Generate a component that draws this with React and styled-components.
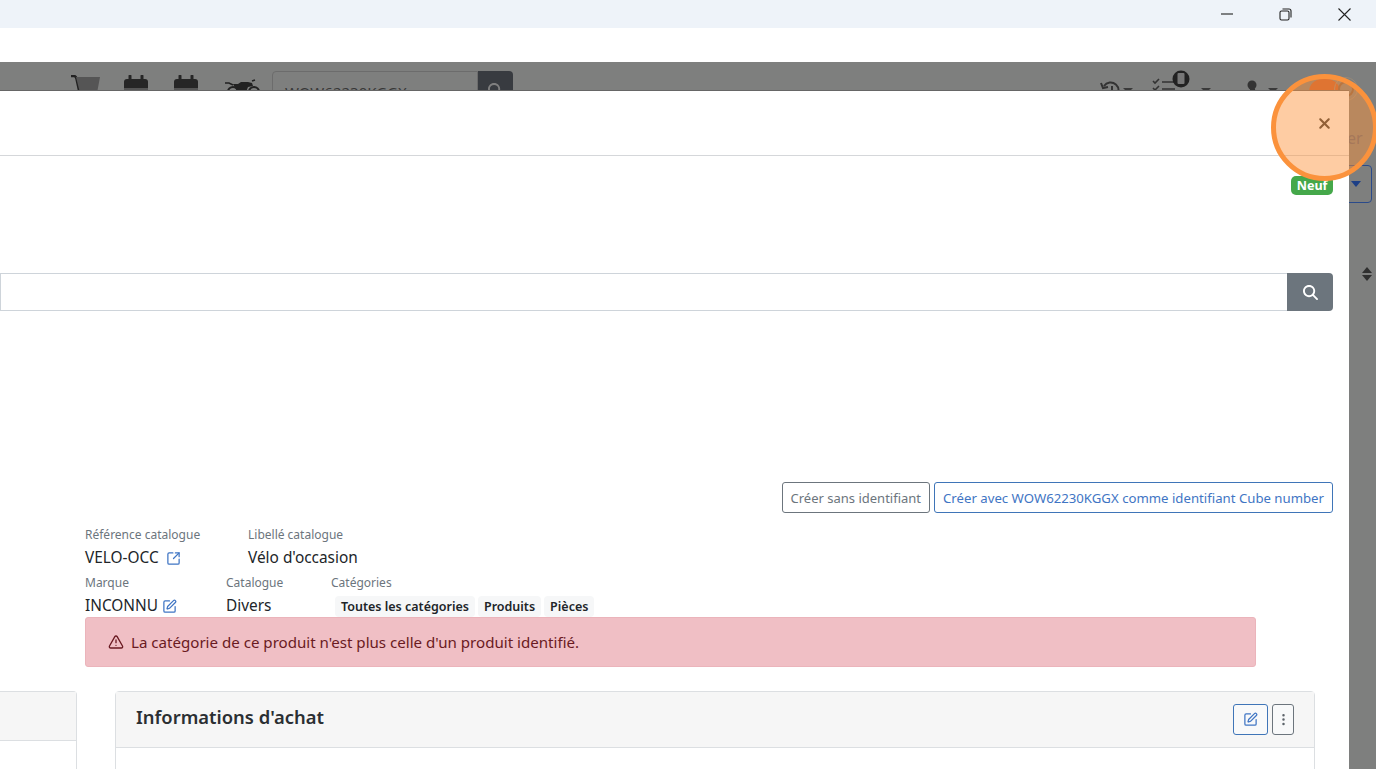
import React from 'react';
import styled, { createGlobalStyle } from 'styled-components';
import { SquareArrowOutUpRight, SquarePen, TriangleAlert, EllipsisVertical } from 'lucide-react';
import { FaMagnifyingGlass, FaXmark } from 'react-icons/fa6';

const GlobalStyle = createGlobalStyle`
  html, body {
    margin: 0;
    height: 100%;
    overflow: hidden;
    background: #fff;
  }
  body {
    font-family: "Noto Sans", "Open Sans", "Liberation Sans", sans-serif;
    color: #212529;
  }
  * { box-sizing: border-box; }
`;

const Screen = styled.div`
  height: 100vh;
  display: flex;
  flex-direction: column;
`;

const TitleBar = styled.div`
  height: 28px;
  background: #eef3f9;
  display: flex;
  justify-content: flex-end;
  padding-right: 2px;
`;

const WinButton = styled.button`
  width: 59px;
  height: 28px;
  padding: 0;
  border: none;
  background: none;
  display: flex;
  align-items: center;
  justify-content: center;
`;

const AddressBar = styled.div`
  height: 34px;
  background: #fff;
`;

const Stage = styled.div`
  position: relative;
  flex: 1;
  background: #7e7f7e;
  overflow: hidden;
`;

const BackNav = styled.div`
  height: 29px;
  padding: 9px 0 0 70px;
  display: flex;
  align-items: flex-start;
  overflow: hidden;
`;

const BackIcon = styled.svg`
  flex: none;
  margin-top: ${props => props.$top || 0}px;
  margin-right: ${props => props.$gap || 0}px;
`;

const BackSearch = styled.div`
  width: 206px;
  height: 36px;
  flex: none;
  border: 1px solid #6c6c6c;
  border-radius: 4px 0 0 4px;
  background: #7e7f7e;
  color: #383838;
  font-size: 15px;
  padding: 10px 12px;
  white-space: nowrap;
`;

const BackSearchButton = styled.div`
  width: 35px;
  height: 36px;
  flex: none;
  background: #383b40;
  border-radius: 0 4px 4px 0;
  color: #7f7f7f;
  display: flex;
  justify-content: center;
  padding-top: 12px;
  margin-right: 587px;
`;

const BackCaret = styled.span`
  width: 0;
  height: 0;
  flex: none;
  margin: 17px ${props => props.$right}px 0 ${props => props.$left}px;
  border-left: 5px solid transparent;
  border-right: 5px solid transparent;
  border-top: 5px solid #3a3a3a;
`;

const BackAvatar = styled.span`
  position: absolute;
  left: 1309px;
  top: 17px;
  width: 31px;
  height: 26px;
  border-radius: 13px;
  background: #c4592a;
`;

const BackHelp = styled.span`
  position: absolute;
  left: 1334px;
  top: 15px;
  width: 24px;
  height: 24px;
  border-radius: 50%;
  border: 1px solid #9a8a78;
  display: flex;
  align-items: center;
  justify-content: center;
  &::after {
    content: '';
    width: 12px;
    height: 12px;
    border-radius: 50%;
    border: 2px solid #7d5c44;
  }
`;

const BackLabel = styled.span`
  position: absolute;
  left: 1347px;
  top: 65px;
  font-size: 16px;
  line-height: 22px;
  color: #576075;
`;

const BackSelect = styled.div`
  position: absolute;
  left: 1340px;
  top: 103px;
  width: 32px;
  height: 38px;
  border: 1px solid #2a4a8a;
  border-radius: 4px;
  display: flex;
  align-items: center;
  justify-content: flex-end;
  padding-right: 10px;
  &::after {
    content: '';
    border-left: 5px solid transparent;
    border-right: 5px solid transparent;
    border-top: 6px solid #1d3f86;
  }
`;

const SortArrows = styled.div`
  position: absolute;
  left: 1362px;
  top: 205px;
  display: flex;
  flex-direction: column;
  gap: 2px;
  &::before, &::after {
    content: '';
    border-left: 5px solid transparent;
    border-right: 5px solid transparent;
  }
  &::before { border-bottom: 6px solid #2f2f2f; }
  &::after { border-top: 6px solid #2f2f2f; }
`;

const Modal = styled.div`
  position: absolute;
  left: 0;
  top: 28px;
  width: 1349px;
  bottom: 0;
  background: #fff;
  border-top: 1px solid #666;
  display: flex;
  flex-direction: column;
`;

const ModalHeader = styled.div`
  height: 65px;
  flex: none;
  border-bottom: 1px solid #d5d7da;
  display: flex;
  align-items: center;
  justify-content: flex-end;
  padding: 0 16px 0 0;
`;

const CloseButton = styled.button`
  border: none;
  background: none;
  padding: 0;
  display: flex;
  color: #333;
`;

const ModalBody = styled.div`
  padding: 20px 0 0 0;
  display: flex;
  flex-direction: column;
`;

const StateRow = styled.div`
  display: flex;
  justify-content: flex-end;
  padding-right: 16px;
  height: 77px;
  margin-bottom: 20px;
`;

const Badge = styled.span`
  height: 19px;
  padding: 0 5.5px;
  border-radius: 5px;
  background: #45a84a;
  color: #fff;
  font-size: 12.6px;
  font-weight: 700;
  line-height: 19px;
`;

const SearchGroup = styled.div`
  display: flex;
  height: 38px;
  padding-right: 16px;
`;

const SearchField = styled.div`
  flex: 1;
  border: 1px solid #ced4da;
  border-right: none;
`;

const SearchButton = styled.button`
  width: 46px;
  padding: 0;
  border: none;
  border-radius: 0 4px 4px 0;
  background: #6c757d;
  color: #fff;
  display: flex;
  align-items: center;
  justify-content: center;
`;

const ActionRow = styled.div`
  display: flex;
  justify-content: flex-end;
  gap: 4px;
  padding-right: 16px;
  margin-top: 171px;
`;

const OutlineButton = styled.button`
  height: 31px;
  padding: 0 8px;
  background: #fff;
  border: 1px solid ${props => props.$primary ? '#3f75b8' : '#6c757d'};
  color: ${props => props.$primary ? '#3f75c4' : '#6c757d'};
  border-radius: 3px;
  font-family: inherit;
  font-size: ${props => props.$primary ? 13.2 : 13}px;
  white-space: nowrap;
`;

const InfoBlock = styled.div`
  padding: 12px 0 0 85px;
  display: flex;
  flex-direction: column;
`;

const InfoRow = styled.div`
  display: flex;
  height: 48px;
`;

const InfoCol = styled.div`
  width: ${props => props.$width}px;
  flex: none;
`;

const Label = styled.div`
  height: 20px;
  font-size: 12px;
  line-height: 20px;
  color: #6c757d;
`;

const Value = styled.div`
  height: 26px;
  font-size: 15.4px;
  line-height: 26px;
  display: flex;
  align-items: center;
  gap: ${props => props.$gap || 0}px;
  color: #212529;
`;

const IconLink = styled.span`
  display: flex;
  color: #3f75c4;
`;

const Tags = styled.div`
  display: flex;
  gap: 3px;
  padding: 3px 0 0 4px;
`;

const Tag = styled.span`
  height: 21px;
  padding: 0 6px;
  background: #f6f7f8;
  border-radius: 4px;
  font-size: 12.5px;
  font-weight: 600;
  line-height: 21px;
  color: #212529;
  white-space: nowrap;
`;

const Alert = styled.div`
  width: 1171px;
  height: 50px;
  margin-top: -4px;
  padding: 0 22px;
  background: #f0bfc5;
  border: 1px solid #ebb4bb;
  border-radius: 3px;
  color: #6a1a22;
  font-size: 15.1px;
  display: flex;
  align-items: center;
  gap: 7px;
`;

const CardRow = styled.div`
  display: flex;
  gap: 38px;
  padding-right: 34px;
  margin-top: 24px;
`;

const Card = styled.div`
  ${props => props.$stub ? 'width: 77px; flex: none;' : 'flex: 1;'}
  height: 120px;
  border: 1px solid #dcdfe2;
  ${props => props.$stub && 'border-left: none;'}
  border-radius: ${props => props.$stub ? '0 4px 0 0' : '4px 4px 0 0'};
`;

const CardHeader = styled.div`
  height: ${props => props.$stub ? 49 : 56}px;
  background: #f6f6f6;
  border-bottom: 1px solid #dcdfe2;
  display: flex;
  align-items: center;
  justify-content: space-between;
  padding: 0 20px;
`;

const CardTitle = styled.h5`
  margin: 0 0 6px;
  font-size: 18.4px;
  font-weight: 600;
  color: #2b2f33;
`;

const CardTools = styled.div`
  display: flex;
  gap: 4px;
`;

const ToolButton = styled.button`
  height: 31px;
  width: ${props => props.$primary ? 35 : 22}px;
  padding: 0;
  background: #f8f9fa;
  border: 1px solid ${props => props.$primary ? '#3f75b8' : '#6c757d'};
  border-radius: 3px;
  color: ${props => props.$primary ? '#3f75c4' : '#5c636a'};
  display: flex;
  align-items: center;
  justify-content: center;
`;

const Highlight = styled.div`
  position: absolute;
  left: 1271px;
  top: 12px;
  width: 107px;
  height: 107px;
  border-radius: 50%;
  border: 5px solid #fb923c;
  background: rgba(253, 146, 60, 0.47);
  pointer-events: none;
`;

const CartIcon = () => (
  <BackIcon $top={4} $gap={24} width="30" height="30" viewBox="0 0 30 30">
    <path d="M1 1h3q2 0 2.5 3L10 20" fill="none" stroke="#222" strokeWidth="2.4" />
    <path d="M6 2h24l-3 16H10z" fill="#555" />
  </BackIcon>
);

const CalendarIcon = ({ gap }) => (
  <BackIcon $top={4} $gap={gap} width="24" height="26" viewBox="0 0 24 26">
    <path d="M6 1v4M18 1v4" stroke="#262626" strokeWidth="3" strokeLinecap="round" />
    <path d="M0 7a3 3 0 0 1 3-3h18a3 3 0 0 1 3 3v6H0z" fill="#262626" />
    <rect y="13" width="24" height="13" fill="#555" />
  </BackIcon>
);

const MotoIcon = () => (
  <BackIcon $top={7} $gap={12} width="35" height="24" viewBox="0 0 35 24">
    <path d="M0 5h4l4 2M27 3l3-1" fill="none" stroke="#222" strokeWidth="1.6" />
    <path d="M8 6h5l3-2h7l4 1 1 3-5 1-2 5h-8l-3-4z" fill="#222" />
    <circle cx="8" cy="14" r="5" fill="none" stroke="#222" strokeWidth="2.2" />
    <circle cx="29" cy="14" r="5" fill="none" stroke="#222" strokeWidth="2.2" />
  </BackIcon>
);

const App = () => (
  <Screen>
    <GlobalStyle />
    <TitleBar>
      <WinButton aria-label="Réduire">
        <svg width="12" height="2" viewBox="0 0 12 2"><path d="M0 1h12" stroke="#222" strokeWidth="1.1" /></svg>
      </WinButton>
      <WinButton aria-label="Restaurer">
        <svg width="13" height="13" viewBox="0 0 13 13" fill="none" stroke="#222" strokeWidth="1.1">
          <rect x="1" y="3" width="9" height="9" rx="1.5" />
          <path d="M3.5 1h6.5A2 2 0 0 1 12 3v6.5" />
        </svg>
      </WinButton>
      <WinButton aria-label="Fermer">
        <svg width="13" height="13" viewBox="0 0 13 13"><path d="M.5.5l12 12M12.5.5l-12 12" stroke="#222" strokeWidth="1.1" /></svg>
      </WinButton>
    </TitleBar>
    <AddressBar />
    <Stage>
      <BackNav>
        <CartIcon />
        <CalendarIcon gap={26} />
        <CalendarIcon gap={27} />
        <MotoIcon />
        <BackSearch>WOW62230KGGX</BackSearch>
        <BackSearchButton><FaMagnifyingGlass size={15} /></BackSearchButton>
        <BackIcon $top={9} width="22" height="22" viewBox="0 0 22 22">
          <path d="M4 6a8 8 0 1 1 0 9M1 3l2 5 5-1" fill="none" stroke="#333" strokeWidth="2" />
          <path d="M12 6v6h4" fill="none" stroke="#333" strokeWidth="2" />
        </BackIcon>
        <BackCaret $left={1} $right={19} />
        <BackIcon $top={-1} width="40" height="24" viewBox="0 0 40 24">
          <path d="M1 11l2 2 4-4M1 18l2 2 4-4M10 12h13M10 19h13" fill="none" stroke="#333" strokeWidth="1.6" />
          <circle cx="29" cy="9" r="8.5" fill="#222" />
          <rect x="25.5" y="3" width="7" height="11" rx="1" fill="#777" />
        </BackIcon>
        <BackCaret $left={9} $right={35} />
        <BackIcon $top={8} width="14" height="20" viewBox="0 0 14 20">
          <circle cx="6" cy="6" r="4.5" fill="#333" />
          <path d="M3 20l1-10h5l1 10z" fill="#333" />
        </BackIcon>
        <BackCaret $left={8} $right={0} />
      </BackNav>
      <BackAvatar />
      <BackHelp />
      <BackLabel>er</BackLabel>
      <BackSelect />
      <SortArrows />
      <Modal>
        <ModalHeader>
          <CloseButton aria-label="Fermer"><FaXmark size={17} /></CloseButton>
        </ModalHeader>
        <ModalBody>
          <StateRow><Badge>Neuf</Badge></StateRow>
          <SearchGroup>
            <SearchField />
            <SearchButton aria-label="Rechercher"><FaMagnifyingGlass size={15} /></SearchButton>
          </SearchGroup>
          <ActionRow>
            <OutlineButton>Créer sans identifiant</OutlineButton>
            <OutlineButton $primary>Créer avec WOW62230KGGX comme identifiant Cube number</OutlineButton>
          </ActionRow>
          <InfoBlock>
            <InfoRow>
              <InfoCol $width={163}>
                <Label>Référence catalogue</Label>
                <Value $gap={7}>VELO-OCC <IconLink><SquareArrowOutUpRight size={15} /></IconLink></Value>
              </InfoCol>
              <InfoCol $width={200}>
                <Label>Libellé catalogue</Label>
                <Value>Vélo d'occasion</Value>
              </InfoCol>
            </InfoRow>
            <InfoRow>
              <InfoCol $width={141}>
                <Label>Marque</Label>
                <Value $gap={4}>INCONNU <IconLink><SquarePen size={15} /></IconLink></Value>
              </InfoCol>
              <InfoCol $width={105}>
                <Label>Catalogue</Label>
                <Value>Divers</Value>
              </InfoCol>
              <InfoCol $width={300}>
                <Label>Catégories</Label>
                <Tags>
                  <Tag>Toutes les catégories</Tag>
                  <Tag>Produits</Tag>
                  <Tag>Pièces</Tag>
                </Tags>
              </InfoCol>
            </InfoRow>
            <Alert>
              <TriangleAlert size={16} />
              La catégorie de ce produit n'est plus celle d'un produit identifié.
            </Alert>
          </InfoBlock>
          <CardRow>
            <Card $stub><CardHeader $stub /></Card>
            <Card>
              <CardHeader>
                <CardTitle>Informations d'achat</CardTitle>
                <CardTools>
                  <ToolButton $primary aria-label="Modifier"><SquarePen size={15} /></ToolButton>
                  <ToolButton aria-label="Options"><EllipsisVertical size={15} /></ToolButton>
                </CardTools>
              </CardHeader>
            </Card>
          </CardRow>
        </ModalBody>
      </Modal>
      <Highlight />
    </Stage>
  </Screen>
);

export default App;
